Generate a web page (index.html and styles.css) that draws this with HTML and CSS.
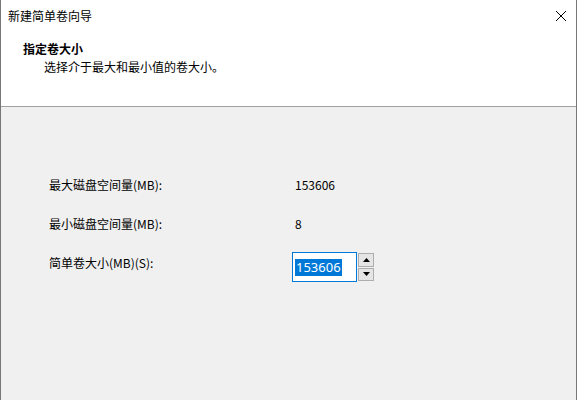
FILE: index.html
```html
<!DOCTYPE html>
<html lang="zh-CN">
<head>
    <meta charset="UTF-8">
    <title>新建简单卷向导</title>
    <link rel="stylesheet" href="styles.css">
</head>
<body>
    <div class="window">
        <header class="top">
            <div class="titlebar">
                <span class="title">新建简单卷向导</span>
                <button class="close-btn" aria-label="关闭">
                    <svg width="12" height="12" viewBox="0 0 12 12">
                        <path d="M1 1 L11 11 M11 1 L1 11" stroke="#000" stroke-width="1"/>
                    </svg>
                </button>
            </div>
            <h1 class="page-title">指定卷大小</h1>
            <p class="page-desc">选择介于最大和最小值的卷大小。</p>
        </header>

        <main class="content">
            <div class="row">
                <span class="label">最大磁盘空间量(MB):</span>
                <span class="value">153606</span>
            </div>
            <div class="row">
                <span class="label">最小磁盘空间量(MB):</span>
                <span class="value">8</span>
            </div>
            <div class="row">
                <span class="label">简单卷大小(MB)(S):</span>
                <div class="spinner">
                    <div class="spin-input"><span class="selected">153606</span></div>
                    <div class="spin-btns">
                        <button class="spin-btn">
                            <svg width="7" height="4" viewBox="0 0 7 4"><path d="M0 4 L3.5 0 L7 4 Z" fill="#000"/></svg>
                        </button>
                        <button class="spin-btn">
                            <svg width="7" height="4" viewBox="0 0 7 4"><path d="M0 0 L3.5 4 L7 0 Z" fill="#000"/></svg>
                        </button>
                    </div>
                </div>
            </div>
        </main>
    </div>
</body>
</html>
```

FILE: styles.css
```css
* {
    margin: 0;
    padding: 0;
    box-sizing: border-box;
}

body {
    width: 577px;
    height: 400px;
    overflow: hidden;
    font-family: "Noto Sans CJK SC", "Liberation Sans", sans-serif;
    font-size: 12px;
    color: #000;
}

.window {
    height: 400px;
    border-left: 1px solid #777;
    border-right: 1px solid #777;
    background-color: #f0f0f0;
    display: flex;
    flex-direction: column;
}

/* 上部 */
.top {
    background-color: #fff;
    height: 107px;
    border-bottom: 1px solid #a0a0a0;
}

.titlebar {
    display: flex;
    justify-content: space-between;
    align-items: center;
    height: 31px;
    padding-left: 7px;
}

.title {
    font-size: 12px;
    line-height: 16px;
}

.close-btn {
    width: 30px;
    height: 30px;
    border: none;
    background: none;
    display: flex;
    align-items: center;
    justify-content: center;
}

.page-title {
    font-size: 12px;
    font-weight: bold;
    line-height: 16px;
    margin-top: 10px;
    padding-left: 22px;
}

.page-desc {
    line-height: 16px;
    margin-top: 2px;
    padding-left: 43px;
}

/* 内容 */
.content {
    padding: 70px 0 0 48px;
    display: flex;
    flex-direction: column;
    gap: 23px;
}

.row {
    display: flex;
    align-items: flex-start;
    height: 16px;
}

.label {
    width: 246px;
    line-height: 16px;
}

.value {
    line-height: 16px;
}

.spinner {
    display: flex;
    margin-left: -3px;
    margin-top: -3px;
    height: 30px;
}

.spin-input {
    width: 65px;
    height: 30px;
    border: 1px solid #0078d7;
    background-color: #fff;
    padding: 5px 0 0 2px;
}

.selected {
    display: inline-block;
    background-color: #0078d7;
    color: #fff;
    font-family: "Noto Sans", "Liberation Sans", sans-serif;
    font-size: 13px;
    line-height: 17px;
    padding: 0 1px;
}

.spin-btns {
    display: flex;
    flex-direction: column;
    gap: 1px;
    margin-left: 1px;
    padding: 1px 0;
}

.spin-btn {
    width: 16px;
    height: 14px;
    border: 1px solid #adadad;
    background-color: #e5e5e5;
    display: flex;
    align-items: center;
    justify-content: center;
}
```
